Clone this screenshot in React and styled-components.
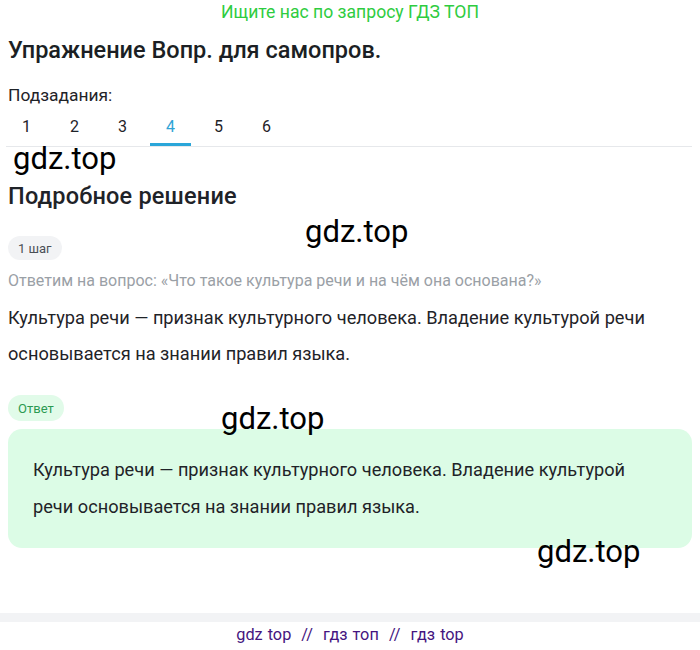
import React from 'react'
import styled, { createGlobalStyle } from 'styled-components'

const GlobalStyle = createGlobalStyle`
  body {
    margin: 0;
    background: #ffffff;
    font-family: Roboto, 'Liberation Sans', sans-serif;
    color: #1f2328;
  }
`

const tabs = ['1', '2', '3', '4', '5', '6']

const watermarks = [
  { x: 13, y: 143 },
  { x: 305, y: 216 },
  { x: 221, y: 403 },
  { x: 537, y: 536 }
]

const Page = styled.div`
  position: relative;
  width: 700px;
  height: 650px;
  overflow: hidden;
`

const Banner = styled.div`
  height: 24px;
  line-height: 24px;
  text-align: center;
  font-size: 17.6px;
  color: #2ecc40;
`

const Content = styled.main`
  padding: 0 8px;
`

const Title = styled.h1`
  margin: 12px 0 0;
  font-size: 23.5px;
  line-height: 28px;
  font-weight: 500;
  color: #1b1f24;
`

const Label = styled.div`
  margin-top: 21px;
  font-size: 17.4px;
  line-height: 20px;
`

const TabRow = styled.div`
  display: flex;
  gap: 7px;
  margin-top: 1px;
  margin-left: -2px;
  border-bottom: 1px solid #e6e8eb;
`

const Tab = styled.div`
  width: 41px;
  height: 40px;
  display: flex;
  align-items: center;
  justify-content: center;
  font-size: 16px;
  color: ${({ active }) => (active ? '#2ea3d6' : '#1f2328')};
  box-shadow: ${({ active }) => (active ? 'inset 0 -3px 0 #2aa6d9' : 'none')};
`

const Heading = styled.h2`
  margin: 36px 0 0;
  font-size: 23.5px;
  line-height: 26px;
  font-weight: 500;
  letter-spacing: 0.2px;
`

const Pill = styled.span`
  display: inline-flex;
  align-items: center;
  height: ${({ h }) => h}px;
  padding: 0 10px;
  border-radius: 13px;
  font-size: 13px;
  background: ${({ bg }) => bg};
  color: ${({ fg }) => fg};
`

const PillRow = styled.div`
  margin-top: ${({ top }) => top}px;
  display: flex;
`

const Question = styled.p`
  margin: 11px 0 0;
  font-size: 16px;
  line-height: 20px;
  color: #9aa0a6;
`

const Body = styled.p`
  margin: 9px 0 0;
  font-size: 18.2px;
  line-height: 36px;
  color: #1f2328;
`

const AnswerBox = styled.div`
  margin-top: 8px;
  padding: 22px 25px 23px;
  border-radius: 14px;
  background: #dcfce6;
`

const AnswerText = styled.p`
  margin: 0;
  max-width: 600px;
  font-size: 18.2px;
  line-height: 37px;
  color: #1f2328;
`

const FooterBand = styled.div`
  margin-top: 65px;
  height: 9px;
  background: #f2f3f5;
`

const FooterText = styled.div`
  height: 26px;
  line-height: 26px;
  text-align: center;
  font-size: 16.3px;
  color: #45157f;
  word-spacing: 1px;
`

const Watermark = styled.div`
  position: absolute;
  font-family: Roboto, 'Liberation Sans', sans-serif;
  font-size: 31px;
  line-height: 31px;
  color: #000;
  pointer-events: none;
`

export default function App() {
  return (
    <Page>
      <GlobalStyle />
      <Banner>Ищите нас по запросу ГДЗ ТОП</Banner>
      <Content>
        <Title>Упражнение Вопр. для самопров.</Title>
        <Label>Подзадания:</Label>
        <TabRow>
          {tabs.map(t => (
            <Tab key={t} active={t === '4'}>{t}</Tab>
          ))}
        </TabRow>
        <Heading>Подробное решение</Heading>
        <PillRow top={27}>
          <Pill h={24} bg="#f2f3f5" fg="#4a4f55">1 шаг</Pill>
        </PillRow>
        <Question>Ответим на вопрос: «Что такое культура речи и на чём она основана?»</Question>
        <Body>
          Культура речи — признак культурного человека. Владение культурой речи
          основывается на знании правил языка.
        </Body>
        <PillRow top={23}>
          <Pill h={26} bg="#e1fbe9" fg="#2b9a52">Ответ</Pill>
        </PillRow>
        <AnswerBox>
          <AnswerText>
            Культура речи — признак культурного человека. Владение культурой речи
            основывается на знании правил языка.
          </AnswerText>
        </AnswerBox>
      </Content>
      <FooterBand />
      <FooterText>gdz top &nbsp;//&nbsp; гдз топ &nbsp;//&nbsp; гдз top</FooterText>
      {watermarks.map((w, i) => (
        <Watermark key={i} style={{ left: w.x, top: w.y }}>gdz.top</Watermark>
      ))}
    </Page>
  )
}
